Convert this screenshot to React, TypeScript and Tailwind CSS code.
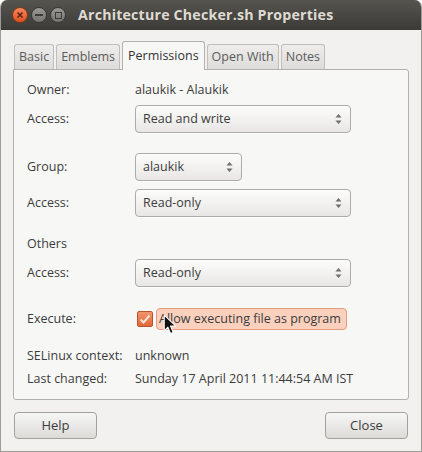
import React from 'react';

const font = { fontFamily: '"Open Sans", "Noto Sans", sans-serif' };

function Combo({ value, width }: { value: string; width: string }) {
  return (
    <div
      className={`${width} h-[28px] flex items-center justify-between pl-[7px] pr-[8px] rounded-[4px] border border-[#aeaca7] bg-gradient-to-b from-[#fcfcfb] to-[#e8e7e5] shadow-[0_1px_0_rgba(255,255,255,0.8)] text-[12.5px] text-[#3c3c3c]`}
    >
      <span>{value}</span>
      <svg width="7" height="12" viewBox="0 0 7 12" className="text-[#6e6d69]">
        <path d="M3.5 1 L6.5 4.5 L0.5 4.5 Z" fill="currentColor" />
        <path d="M3.5 11 L6.5 7.5 L0.5 7.5 Z" fill="currentColor" />
      </svg>
    </div>
  );
}

function Row({ label, children, className = '' }: { label: string; children?: React.ReactNode; className?: string }) {
  return (
    <div className={`flex items-center ${className}`}>
      <div className="w-[108px] shrink-0">{label}</div>
      {children}
    </div>
  );
}

function Tab({ label, active = false }: { label: string; active?: boolean }) {
  if (active) {
    return (
      <div className="relative z-10 h-[29px] -mb-px px-[5px] flex items-center rounded-t-[3px] border border-b-0 border-[#b3b1ac] bg-[#f7f7f6] text-[12.5px] text-[#333]">
        {label}
      </div>
    );
  }
  return (
    <div className="h-[25px] px-[4px] flex items-center rounded-t-[3px] border border-b-0 border-[#c0beb9] bg-gradient-to-b from-[#eeedec] to-[#dddcda] text-[12.5px] text-[#5b5b5b]">
      {label}
    </div>
  );
}

export default function App() {
  return (
    <div className="w-[422px] h-[452px] bg-white" style={font}>
      <div className="w-full h-full flex flex-col rounded-t-[7px] overflow-hidden border-x border-b border-[#9d9b97] bg-[#f2f1f0]">
        {/* title bar */}
        <div className="h-[30px] shrink-0 flex items-center bg-gradient-to-b from-[#55544f] to-[#3c3b37] pl-[11px]">
          <div className="w-[16px] h-[16px] rounded-full bg-gradient-to-b from-[#f5875a] to-[#d9521f] border border-[#8c3816] flex items-center justify-center">
            <svg width="8" height="8" viewBox="0 0 8 8">
              <path d="M1.5 1.5 L6.5 6.5 M6.5 1.5 L1.5 6.5" stroke="#5a2410" strokeWidth="1.5" />
            </svg>
          </div>
          <div className="ml-[3px] w-[16px] h-[16px] rounded-full bg-gradient-to-b from-[#9a9893] to-[#76746f] border border-[#3a3935] flex items-center justify-center">
            <div className="w-[8px] h-[2px] bg-[#3c3b37]" />
          </div>
          <div className="ml-[3px] w-[16px] h-[16px] rounded-full bg-gradient-to-b from-[#9a9893] to-[#76746f] border border-[#3a3935] flex items-center justify-center">
            <div className="w-[7px] h-[7px] border-[1.5px] border-[#3c3b37]" />
          </div>
          <div className="ml-[12px] text-[14.2px] font-bold text-[#dfdbd2] tracking-[0.2px]">
            Architecture Checker.sh Properties
          </div>
        </div>

        {/* tabs */}
        <div className="flex items-end gap-[2px] pl-[13px] pt-[11px]">
          <Tab label="Basic" />
          <Tab label="Emblems" />
          <Tab label="Permissions" active />
          <Tab label="Open With" />
          <Tab label="Notes" />
        </div>

        {/* panel */}
        <div className="mx-[12px] h-[331px] rounded-b-[3px] rounded-tr-[3px] border border-[#b3b1ac] bg-[#f7f7f6] pl-[13px] pt-[11px] text-[12.5px] text-[#3c3c3c] flex flex-col">
          <Row label="Owner:" className="h-[18px]">
            <span>alaukik - Alaukik</span>
          </Row>
          <Row label="Access:" className="mt-[6px]">
            <Combo value="Read and write" width="w-[216px]" />
          </Row>
          <Row label="Group:" className="mt-[20px]">
            <Combo value="alaukik" width="w-[107px]" />
          </Row>
          <Row label="Access:" className="mt-[8px]">
            <Combo value="Read-only" width="w-[216px]" />
          </Row>
          <Row label="Others" className="mt-[18px] h-[18px]" />
          <Row label="Access:" className="mt-[6px]">
            <Combo value="Read-only" width="w-[216px]" />
          </Row>
          <Row label="Execute:" className="mt-[20px] h-[24px]">
            <div className="relative flex items-center">
              <div className="w-[16px] h-[16px] ml-[2px] rounded-[2px] border border-[#b8542c] bg-gradient-to-b from-[#f2956c] to-[#e0673a] flex items-center justify-center">
                <svg width="12" height="11" viewBox="0 0 12 11">
                  <path d="M1.5 5.5 L4.5 8.5 L10.5 1.5" stroke="#fbe3d6" strokeWidth="2" fill="none" />
                </svg>
              </div>
              <div className="ml-[3px] h-[22px] pl-[2px] pr-[5px] flex items-center rounded-[4px] border border-[#e59d82] bg-[#fbd0bc]">
                Allow executing file as program
              </div>
              <svg
                width="14"
                height="21"
                viewBox="0 0 13 20"
                className="absolute left-[28px] top-[6px]"
              >
                <path
                  d="M1 1 L1 16 L4.5 12.5 L7 18.5 L9.5 17.5 L7 11.5 L12 11.5 Z"
                  fill="#111"
                  stroke="#fff"
                  strokeWidth="1"
                  strokeLinejoin="round"
                />
              </svg>
            </div>
          </Row>
          <Row label="SELinux context:" className="mt-[16px] h-[18px]">
            <span>unknown</span>
          </Row>
          <Row label="Last changed:" className="mt-[5px] h-[18px]">
            <span>Sunday 17 April 2011 11:44:54 AM IST</span>
          </Row>
        </div>

        {/* buttons */}
        <div className="flex justify-between px-[13px] mt-[12px]">
          <button className="w-[83px] h-[27px] rounded-[4px] border border-[#a3a19c] bg-gradient-to-b from-[#f6f6f5] to-[#dcdbd8] text-[13px] text-[#3c3c3c]">
            Help
          </button>
          <button className="w-[83px] h-[27px] rounded-[4px] border border-[#a3a19c] bg-gradient-to-b from-[#f6f6f5] to-[#dcdbd8] text-[13px] text-[#3c3c3c]">
            Close
          </button>
        </div>
      </div>
    </div>
  );
}
